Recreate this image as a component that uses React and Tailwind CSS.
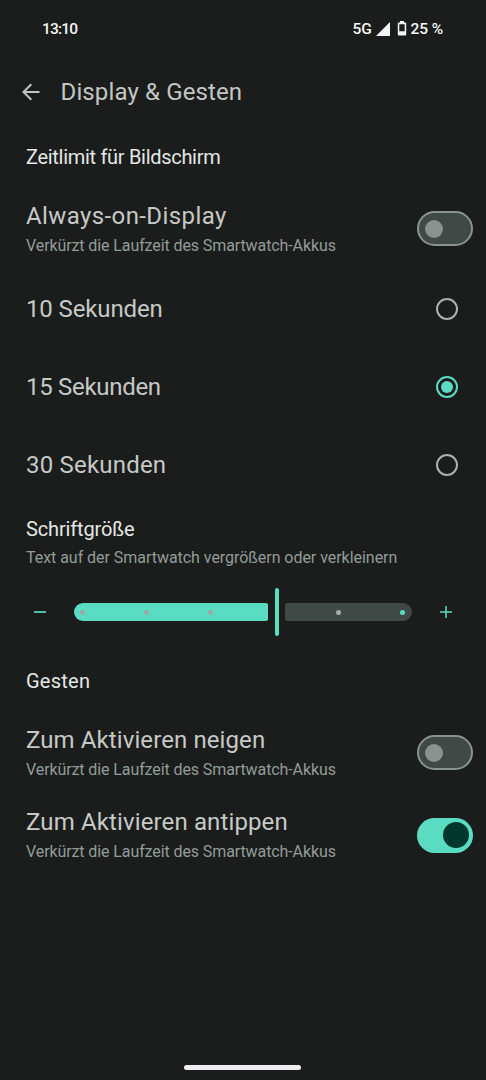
import { useState } from 'react'

function StatusBar() {
  return (
    <div className="flex h-[58px] items-center justify-between pl-[42px] pr-[43px] pt-px text-[15.5px] font-medium text-[#f4f6f4]">
      <span className="tracking-[-0.8px]">13:10</span>
      <div className="flex items-center">
        <span className="tracking-[-0.2px]">5G</span>
        <svg className="mb-0.5 ml-1 h-[14px] w-[14px]" viewBox="0 0 14 14" fill="currentColor">
          <path d="M14 0v14H0z" />
        </svg>
        <svg className="mb-0.5 ml-[7px] h-[15px] w-[10px]" viewBox="0 0 10 15" fill="currentColor">
          <path
            fillRule="evenodd"
            d="M3 0h4v1.5h1.2q1 0 1 1V13.5q0 1-1 1H1.8q-1 0-1-1V2.5q0-1 1-1H3zM2.3 3.2v7h5.4v-7z"
          />
        </svg>
        <span className="ml-1 tracking-[-0.1px]">25 %</span>
      </div>
    </div>
  )
}

function Toggle({ checked, onChange }) {
  return (
    <button
      role="switch"
      aria-checked={checked}
      onClick={onChange}
      className={`flex h-[35px] w-[56.5px] shrink-0 items-center rounded-full ${
        checked
          ? 'justify-end bg-[#5adcc3] pr-1'
          : 'border-2 border-[#89938f] bg-[#404946] pl-[6.5px]'
      }`}
    >
      <span
        className={`rounded-full ${
          checked ? 'h-[26px] w-[26px] bg-[#00382e]' : 'h-[18px] w-[18px] bg-[#89938f]'
        }`}
      />
    </button>
  )
}

function ToggleRow({ title, spacing, height = 'h-[83px]', checked, onChange }) {
  return (
    <div className={`flex items-center justify-between pl-[26px] pr-[13px] ${height}`}>
      <div>
        <div className={`text-2xl leading-8 text-[#c6c9c6] ${spacing}`}>{title}</div>
        <div className="mt-0.5 text-base leading-6 tracking-[-0.1px] text-[#929c98]">
          Verkürzt die Laufzeit des Smartwatch-Akkus
        </div>
      </div>
      <Toggle checked={checked} onChange={onChange} />
    </div>
  )
}

function RadioRow({ label, spacing, selected, onSelect }) {
  return (
    <button
      role="radio"
      aria-checked={selected}
      onClick={onSelect}
      className="flex h-[78px] w-full items-center justify-between pl-[26px] pr-7 text-left"
    >
      <span className={`text-2xl leading-8 text-[#c6c9c6] ${spacing}`}>{label}</span>
      <span
        className={`flex h-[22px] w-[22px] items-center justify-center rounded-full border-2 ${
          selected ? 'border-[#5adcc3]' : 'border-[#a9b2ae]'
        }`}
      >
        {selected && <span className="h-3 w-3 rounded-full bg-[#5adcc3]" />}
      </span>
    </button>
  )
}

function Dot({ className }) {
  return <span className={`h-[5px] w-[5px] rounded-full ${className}`} />
}

function FontSizeSlider() {
  return (
    <div className="mt-[18px] flex h-[48px] items-center pl-[34px] pr-[34px] text-[#5adcc3]">
      <svg className="h-3 w-3" viewBox="0 0 12 12" stroke="currentColor" strokeWidth="1.7">
        <path d="M0 6h12" />
      </svg>
      <div className="ml-[27.5px] flex h-[18px] w-[194.5px] items-center gap-[59.2px] rounded-l-[9px] rounded-r-[2px] bg-[#5adcc3] pl-[6.5px]">
        <Dot className="bg-[#a0a9a4]" />
        <Dot className="bg-[#a0a9a4]" />
        <Dot className="bg-[#a0a9a4]" />
      </div>
      <div className="ml-[6.7px] h-[48px] w-[4.6px] rounded-full bg-[#5adcc3]" />
      <div className="ml-[5.7px] flex h-[18px] w-[127px] items-center justify-end gap-[59.2px] rounded-l-[2px] rounded-r-[9px] bg-[#404946] pr-[6.5px]">
        <Dot className="bg-[#a6aeaa]" />
        <Dot className="bg-[#5adcc3]" />
      </div>
      <svg className="ml-auto h-3 w-3" viewBox="0 0 12 12" stroke="currentColor" strokeWidth="1.5">
        <path d="M0 6h12M6 0v12" />
      </svg>
    </div>
  )
}

const timeouts = [
  { label: '10 Sekunden', spacing: 'tracking-[-0.13px]' },
  { label: '15 Sekunden', spacing: 'tracking-[-0.3px]' },
  { label: '30 Sekunden', spacing: 'tracking-[0.2px]' },
]

function App() {
  const [alwaysOn, setAlwaysOn] = useState(false)
  const [timeout, setTimeoutLabel] = useState('15 Sekunden')
  const [tilt, setTilt] = useState(false)
  const [tap, setTap] = useState(true)

  return (
    <div className="flex h-[1080px] w-[486px] flex-col overflow-hidden bg-[#1b1d1c] font-['Roboto',sans-serif] whitespace-nowrap">
      <StatusBar />

      <header className="flex h-[66px] items-center pl-[21.5px] pt-px text-[#c3c6c3]">
        <svg
          className="h-[18px] w-[18px]"
          viewBox="0 0 18 18"
          fill="none"
          stroke="currentColor"
          strokeWidth="2"
        >
          <path d="M17.5 9H1.5M9.3 1.2L1.5 9l7.8 7.8" />
        </svg>
        <h1 className="ml-[21px] text-2xl leading-8 tracking-[0.13px]">Display &amp; Gesten</h1>
      </header>

      <h2 className="h-[63px] pt-[21px] pl-[26px] text-xl leading-6 tracking-[-0.3px] text-[#e4e7e4]">
        Zeitlimit für Bildschirm
      </h2>
      <ToggleRow
        title="Always-on-Display"
        spacing="tracking-[0.4px]"
        checked={alwaysOn}
        onChange={() => setAlwaysOn(!alwaysOn)}
      />
      <div role="radiogroup">
        {timeouts.map(({ label, spacing }) => (
          <RadioRow
            key={label}
            label={label}
            spacing={spacing}
            selected={timeout === label}
            onSelect={() => setTimeoutLabel(label)}
          />
        ))}
      </div>

      <div className="pt-[13px] pl-[26px]">
        <h2 className="text-xl leading-6 tracking-[-0.15px] text-[#e4e7e4]">Schriftgröße</h2>
        <p className="mt-[5px] text-base leading-6 tracking-[-0.04px] text-[#929c98]">
          Text auf der Smartwatch vergrößern oder verkleinern
        </p>
      </div>
      <FontSizeSlider />

      <h2 className="h-[75px] pt-[33px] pl-[26px] text-xl leading-6 tracking-[0.25px] text-[#e4e7e4]">
        Gesten
      </h2>
      <ToggleRow
        title="Zum Aktivieren neigen"
        spacing="tracking-[0.1px]"
        checked={tilt}
        onChange={() => setTilt(!tilt)}
      />
      <ToggleRow
        title="Zum Aktivieren antippen"
        spacing="tracking-[0.13px]"
        height="h-[82px]"
        checked={tap}
        onChange={() => setTap(!tap)}
      />

      {/* system gesture bar */}
      <div className="mt-auto mb-[10.5px] ml-[184px] h-[5px] w-[117px] rounded-full bg-[#f1ecef]" />
    </div>
  )
}

export default App
